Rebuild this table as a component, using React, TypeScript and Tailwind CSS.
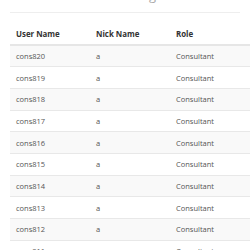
import React from 'react';

interface UserRow {
  userName: string;
  nickName: string;
  role: string;
}

const rows: UserRow[] = Array.from({ length: 10 }, (_, i) => ({
  userName: `cons${820 - i}`,
  nickName: 'a',
  role: 'Consultant',
}));

export default function App() {
  return (
    <div className="w-[250px] h-[250px] overflow-hidden bg-white font-['Open_Sans',sans-serif]">
      {/* Page heading, mostly scrolled out of view */}
      <div className="mx-[10px] -mt-[12px] h-[25px] border-b border-[#eeeeee]">
        <div className="text-[13px] leading-[14px] text-[#aaaaaa] pl-[4px]">
          Consultant User Management
        </div>
      </div>

      {/* User table */}
      <table className="ml-[10px] mt-[10px] w-[320px] table-fixed border-collapse text-[7.5px] leading-[10px]">
        <colgroup>
          <col className="w-[80px]" />
          <col className="w-[80px]" />
          <col />
        </colgroup>
        <thead>
          <tr className="h-[22px] border-b-2 border-[#e6e6e6]">
            <th className="px-[6px] text-left font-bold text-[7.9px] text-[#333333]">User Name</th>
            <th className="px-[6px] text-left font-bold text-[7.9px] text-[#333333]">Nick Name</th>
            <th className="px-[6px] text-left font-bold text-[7.9px] text-[#333333]">Role</th>
          </tr>
        </thead>
        <tbody>
          {rows.map((row, i) => (
            <tr
              key={row.userName}
              className={`h-[21.7px] ${i > 0 ? 'border-t border-[#e8e8e8]' : ''} ${i % 2 === 0 ? 'bg-[#f9f9f9]' : 'bg-white'}`}
            >
              <td className="px-[6px] text-[#555555]">{row.userName}</td>
              <td className="px-[6px] text-[#555555]">{row.nickName}</td>
              <td className="px-[6px] text-[#555555]">{row.role}</td>
            </tr>
          ))}
        </tbody>
      </table>
    </div>
  );
}
